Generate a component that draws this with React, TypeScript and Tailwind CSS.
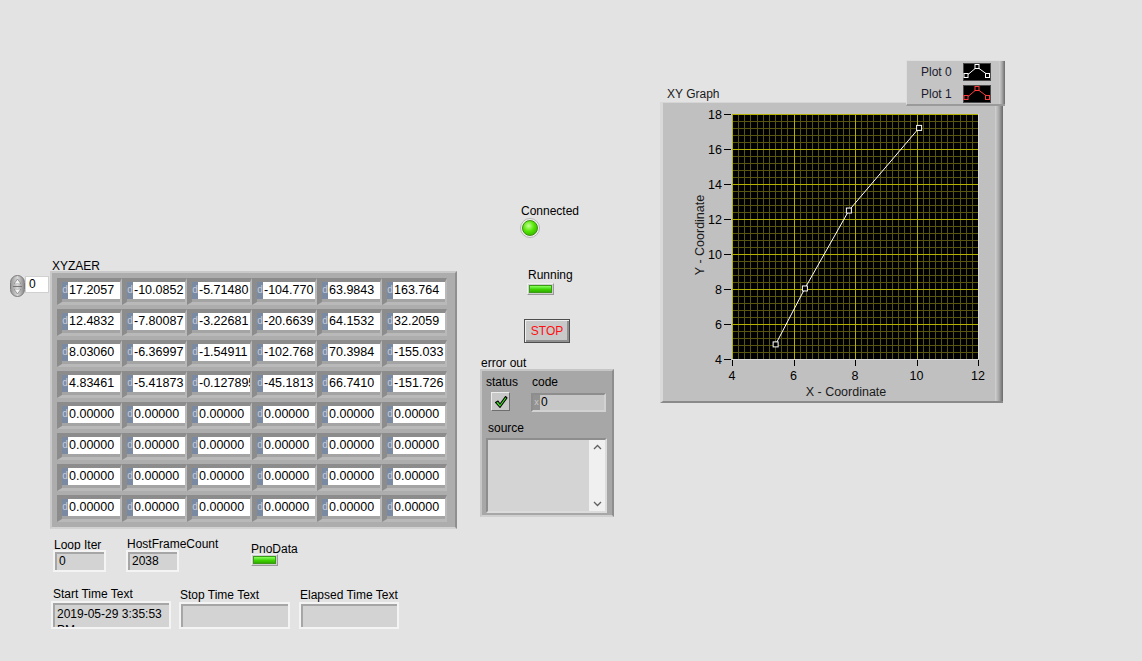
import React from "react";

const font = { fontFamily: '"Liberation Sans", Arial, sans-serif' };

const rows: string[][] = [
  ["17.2057", "-10.0852", "-5.71480", "-104.770", "63.9843", "163.764"],
  ["12.4832", "-7.80087", "-3.22681", "-20.6639", "64.1532", "32.2059"],
  ["8.03060", "-6.36997", "-1.54911", "-102.768", "70.3984", "-155.033"],
  ["4.83461", "-5.41873", "-0.127895", "-45.1813", "66.7410", "-151.726"],
  ["0.00000", "0.00000", "0.00000", "0.00000", "0.00000", "0.00000"],
  ["0.00000", "0.00000", "0.00000", "0.00000", "0.00000", "0.00000"],
  ["0.00000", "0.00000", "0.00000", "0.00000", "0.00000", "0.00000"],
  ["0.00000", "0.00000", "0.00000", "0.00000", "0.00000", "0.00000"],
];

const points: [number, number][] = [
  [5.41873, 4.83461],
  [6.36997, 8.0306],
  [7.80087, 12.4832],
  [10.0852, 17.2057],
];

function Cell({ value }: { value: string }) {
  return (
    <div className="w-[65px] h-[27px] bg-[#a4a4a4] border-t-[4px] border-l-[5px] border-t-[#8c8c8c] border-l-[#8c8c8c] border-b-[3px] border-r-[2px] border-b-[#b9b9b9] border-r-[#b9b9b9] flex">
      <div className="w-[6px] h-[17px] bg-[#7b8aa3] text-[#c3ccdb] text-[10px] leading-[15px] flex justify-center overflow-visible">d</div>
      <div className="w-[52px] h-[17px] bg-white text-[12.5px] leading-[17px] pl-[1px] overflow-hidden whitespace-nowrap text-black">{value}</div>
    </div>
  );
}

function Spinner() {
  return (
    <div className="w-[15px] h-[22px] rounded-full bg-gradient-to-r from-[#9a9a9a] via-[#d8d8d8] to-[#8c8c8c] border border-[#7a7a7a] flex flex-col items-center justify-center gap-[2px]">
      <svg width="7" height="5" viewBox="0 0 7 5">
        <path d="M3.5 0 L7 5 L0 5 Z" fill="#f4f4f4" stroke="#6e6e6e" strokeWidth="0.6" />
      </svg>
      <div className="w-[9px] h-px bg-[#777]" />
      <svg width="7" height="5" viewBox="0 0 7 5">
        <path d="M0 0 L7 0 L3.5 5 Z" fill="#f4f4f4" stroke="#6e6e6e" strokeWidth="0.6" />
      </svg>
    </div>
  );
}

function Indicator({ text, w, h, multi }: { text: string; w: string; h: string; multi?: boolean }) {
  return (
    <div className={`${w} ${h} bg-[#d3d3d3] border-2 border-[#f4f4f4] shadow-[inset_2px_2px_0_#a6a6a6] overflow-hidden`}>
      <div className={`text-[12px] text-black px-[4px] ${multi ? "leading-[16px] pt-[3px]" : "leading-[17px] pt-px"}`}>{text}</div>
    </div>
  );
}

function RectLed() {
  return (
    <div className="w-[27px] h-[12px] bg-[#cfcfcf] border border-t-[#f0f0f0] border-l-[#f0f0f0] border-b-[#9a9a9a] border-r-[#9a9a9a] p-[1px] flex">
      <div className="flex-1 bg-gradient-to-b from-[#8aff5a] via-[#44d800] to-[#2fae00] border border-[#3b9a16]" />
    </div>
  );
}

function LegendIcon({ color }: { color: string }) {
  return (
    <svg width="28" height="18" viewBox="0 0 28 18">
      <rect x="0" y="0" width="28" height="18" fill="#000" />
      <rect x="0.5" y="0.5" width="27" height="17" fill="none" stroke="#4a4a4a" />
      <polyline points="2,14 14,4 25,12" fill="none" stroke={color} strokeWidth="1" />
      <rect x="1" y="10.5" width="4" height="4" fill="#000" stroke={color} />
      <rect x="12" y="1.5" width="4" height="4" fill="#000" stroke={color} />
      <rect x="22.5" y="10.5" width="4" height="4" fill="#000" stroke={color} />
    </svg>
  );
}

function Graph() {
  const L = 69, R = 315, T = 11, B = 256;
  const mx = (x: number) => L + ((x - 4) / 8) * (R - L);
  const my = (y: number) => B - ((y - 4) / 14) * (B - T);
  const vMinor: number[] = [];
  for (let i = 0; i <= 40; i++) vMinor.push(Math.round(L + (i * (R - L)) / 40) + 0.5);
  const hMinor: number[] = [];
  for (let i = 0; i <= 35; i++) hMinor.push(Math.round(T + (i * (B - T)) / 35) + 0.5);
  const xTicks = [4, 6, 8, 10, 12];
  const yTicks = [4, 6, 8, 10, 12, 14, 16, 18];
  return (
    <svg width="332" height="297" viewBox="0 0 332 297" style={font}>
      <rect x={L} y={T} width={R - L} height={B - T} fill="#000" />
      {vMinor.map((x, i) => (
        <line key={"v" + i} x1={x} y1={T} x2={x} y2={B} stroke="#58560e" strokeWidth="1" />
      ))}
      {hMinor.map((y, i) => (
        <line key={"h" + i} x1={L} y1={y} x2={R} y2={y} stroke="#58560e" strokeWidth="1" />
      ))}
      {xTicks.map((t) => (
        <line key={"xm" + t} x1={Math.round(mx(t)) + 0.5} y1={T} x2={Math.round(mx(t)) + 0.5} y2={B} stroke="#b4b000" strokeWidth="1" />
      ))}
      {yTicks.map((t) => (
        <line key={"ym" + t} x1={L} y1={Math.round(my(t)) + 0.5} x2={R} y2={Math.round(my(t)) + 0.5} stroke="#b4b000" strokeWidth="1" />
      ))}
      <polyline
        points={points.map(([x, y]) => `${mx(x)},${my(y)}`).join(" ")}
        fill="none"
        stroke="#fff"
        strokeWidth="1"
      />
      {points.map(([x, y], i) => (
        <rect key={"p" + i} x={mx(x) - 2.5} y={my(y) - 2.5} width="5" height="5" fill="#000" stroke="#fff" strokeWidth="1" />
      ))}
      <line x1={L} y1={B + 0.5} x2={R} y2={B + 0.5} stroke="#d8d8d8" strokeWidth="1" />
      <line x1={R + 0.5} y1={T} x2={R + 0.5} y2={B} stroke="#d8d8d8" strokeWidth="1" />
      {yTicks.map((t) => (
        <g key={"yt" + t}>
          <line x1={L - 8} y1={Math.round(my(t)) + 0.5} x2={L - 1} y2={Math.round(my(t)) + 0.5} stroke="#000" strokeWidth="1" />
          <text x={L - 10} y={my(t) + 4.5} fontSize="12.5" textAnchor="end" fill="#000">{t}</text>
        </g>
      ))}
      {xTicks.map((t) => (
        <g key={"xt" + t}>
          <line x1={Math.round(mx(t)) + 0.5} y1={B + 1} x2={Math.round(mx(t)) + 0.5} y2={B + 7} stroke="#000" strokeWidth="1" />
          <text x={mx(t)} y={B + 21} fontSize="12.5" textAnchor="middle" fill="#000">{t}</text>
        </g>
      ))}
      <text x={183} y={293} fontSize="12.5" textAnchor="middle" fill="#1a1a1a">X - Coordinate</text>
      <text x={0} y={0} fontSize="12.5" textAnchor="middle" fill="#1a1a1a" transform="translate(41 132) rotate(-90)">
        Y - Coordinate
      </text>
    </svg>
  );
}

export default function App() {
  return (
    <div className="relative w-[1142px] h-[661px] bg-[#e3e3e3] overflow-hidden text-black" style={font}>
      {/* array */}
      <div className="absolute left-[52px] top-[257px] text-[12px]">XYZAER</div>
      <div className="absolute left-[10px] top-[275px] flex items-start">
        <Spinner />
        <div className="w-[24px] h-[17px] mt-[1px] bg-white border border-[#d0d0d0] text-[12px] leading-[15px] pl-[3px]">0</div>
      </div>
      <div className="absolute left-[50px] top-[271px] w-[407px] h-[258px] bg-[#adadad] border-t-2 border-l-2 border-t-[#c9c9c9] border-l-[#c9c9c9] border-b-2 border-r-2 border-b-[#d2d2d2] border-r-[#8f8f8f] pl-[5px] pt-[5px] flex flex-col gap-[4px]">
        {rows.map((r, i) => (
          <div key={i} className="flex">
            {r.map((v, j) => (
              <Cell key={j} value={v} />
            ))}
          </div>
        ))}
      </div>

      {/* connected / running / stop */}
      <div className="absolute left-[521px] top-[202px] text-[12px]">Connected</div>
      <div className="absolute left-[520px] top-[218px] w-[20px] h-[20px] rounded-full bg-[#f0f0f0] border border-[#b5b5b5] flex items-center justify-center">
        <div className="w-[16px] h-[16px] rounded-full bg-[radial-gradient(circle_at_40%_35%,#c8ff9a_0%,#52e600_45%,#2c9c00_100%)] border border-[#3a8f10]" />
      </div>
      <div className="absolute left-[528px] top-[266px] text-[12px]">Running</div>
      <div className="absolute left-[527px] top-[283px]">
        <RectLed />
      </div>
      <div className="absolute left-[524px] top-[319px] w-[46px] h-[24px] bg-[#c9c9c9] border border-[#4e4e4e] shadow-[inset_1px_1px_0_#efefef,inset_-2px_-2px_0_#8f8f8f] flex items-center justify-center text-[12px] text-[#ff1010]">
        STOP
      </div>

      {/* error out */}
      <div className="absolute left-[481px] top-[354px] text-[12px]">error out</div>
      <div className="absolute left-[480px] top-[369px] w-[134px] h-[148px] bg-[#a7a7a7] border-t-2 border-l-2 border-t-[#c6c6c6] border-l-[#c6c6c6] border-b-2 border-r-2 border-b-[#d0d0d0] border-r-[#8e8e8e] px-[4px] pt-[4px] flex flex-col">
        <div className="flex gap-[13px]">
          <div className="flex flex-col items-start">
            <div className="text-[12px] leading-[15px]">status</div>
            <div className="mt-[2px] ml-[5px] w-[19px] h-[19px] bg-[#c8c8c8] border border-t-[#ececec] border-l-[#ececec] border-b-[#6e6e6e] border-r-[#6e6e6e] flex items-center justify-center">
              <svg width="14" height="14" viewBox="0 0 14 14">
                <path d="M1.5 7.5 L4 6 L6 9 L11.5 1.5 L13 3 L6 12.5 Z" fill="#3de01a" stroke="#000" strokeWidth="1.1" strokeLinejoin="round" />
              </svg>
            </div>
          </div>
          <div className="flex flex-col">
            <div className="text-[12px] leading-[15px] pl-[1px]">code</div>
            <div className="mt-[3px] w-[75px] h-[19px] bg-[#c7c7c7] border-2 border-t-[#8d8d8d] border-l-[#8d8d8d] border-b-[#d2d2d2] border-r-[#d2d2d2] flex">
              <div className="w-[7px] bg-[#929292] text-[9px] leading-[14px] text-[#c8c8c8] flex justify-center">x</div>
              <div className="text-[12px] leading-[15px] pl-[1px]">0</div>
            </div>
          </div>
        </div>
        <div className="text-[12px] leading-[15px] mt-[9px] pl-[2px]">source</div>
        <div className="mt-[2px] w-[121px] h-[75px] bg-[#d4d4d4] border-2 border-t-[#8d8d8d] border-l-[#8d8d8d] border-b-[#dcdcdc] border-r-[#dcdcdc] flex justify-end">
          <div className="w-[16px] h-full bg-[#f0f0f0] flex flex-col items-center justify-between py-[4px]">
            <svg width="9" height="6" viewBox="0 0 9 6"><path d="M1 5 L4.5 1.5 L8 5" fill="none" stroke="#606060" strokeWidth="1.3" /></svg>
            <svg width="9" height="6" viewBox="0 0 9 6"><path d="M1 1 L4.5 4.5 L8 1" fill="none" stroke="#606060" strokeWidth="1.3" /></svg>
          </div>
        </div>
      </div>

      {/* XY graph */}
      <div className="absolute left-[667px] top-[85px] text-[12px] text-[#1a1a1a]">XY Graph</div>
      <div className="absolute left-[660px] top-[102px] w-[343px] h-[301px] flex bg-[#c0c0c0] border-t border-l-[3px] border-t-[#d6d6d6] border-l-[#d9d9d9] border-b-2 border-b-[#8a8a8a]">
        <Graph />
        <div className="w-[8px] h-full bg-gradient-to-r from-[#d2d2d2] via-[#a8a8a8] to-[#6a6a6a]" />
      </div>
      <div className="absolute left-[906px] top-[60px] w-[99px] h-[46px] flex bg-[#c4c4c4] border-t border-l border-t-[#dedede] border-l-[#dedede] border-b-2 border-b-[#9a9a9a]">
        <div className="flex-1 flex flex-col justify-center gap-[4px] pl-[14px]">
          <div className="flex items-center gap-[7px]">
            <div className="w-[35px] text-[12px] text-[#1a1a2e]">Plot 0</div>
            <LegendIcon color="#ffffff" />
          </div>
          <div className="flex items-center gap-[7px]">
            <div className="w-[35px] text-[12px] text-[#1a1a2e]">Plot 1</div>
            <LegendIcon color="#ff3b3b" />
          </div>
        </div>
        <div className="w-[6px] h-full bg-gradient-to-r from-[#d2d2d2] via-[#a8a8a8] to-[#6a6a6a]" />
      </div>

      {/* bottom */}
      <div className="absolute left-[54px] top-[536px] text-[12px]">Loop Iter</div>
      <div className="absolute left-[53px] top-[550px]">
        <Indicator text="0" w="w-[53px]" h="h-[22px]" />
      </div>
      <div className="absolute left-[127px] top-[535px] text-[12px]">HostFrameCount</div>
      <div className="absolute left-[126px] top-[550px]">
        <Indicator text="2038" w="w-[53px]" h="h-[22px]" />
      </div>
      <div className="absolute left-[251px] top-[540px] text-[12px]">PnoData</div>
      <div className="absolute left-[251px] top-[554px]">
        <RectLed />
      </div>
      <div className="absolute left-[53px] top-[585px] text-[12px]">Start Time Text</div>
      <div className="absolute left-[51px] top-[601px]">
        <Indicator text="2019-05-29 3:35:53 PM" w="w-[120px]" h="h-[28px]" multi />
      </div>
      <div className="absolute left-[180px] top-[586px] text-[12px]">Stop Time Text</div>
      <div className="absolute left-[179px] top-[602px]">
        <Indicator text="" w="w-[111px]" h="h-[27px]" />
      </div>
      <div className="absolute left-[300px] top-[586px] text-[12px]">Elapsed Time Text</div>
      <div className="absolute left-[299px] top-[602px]">
        <Indicator text="" w="w-[100px]" h="h-[27px]" />
      </div>
    </div>
  );
}
